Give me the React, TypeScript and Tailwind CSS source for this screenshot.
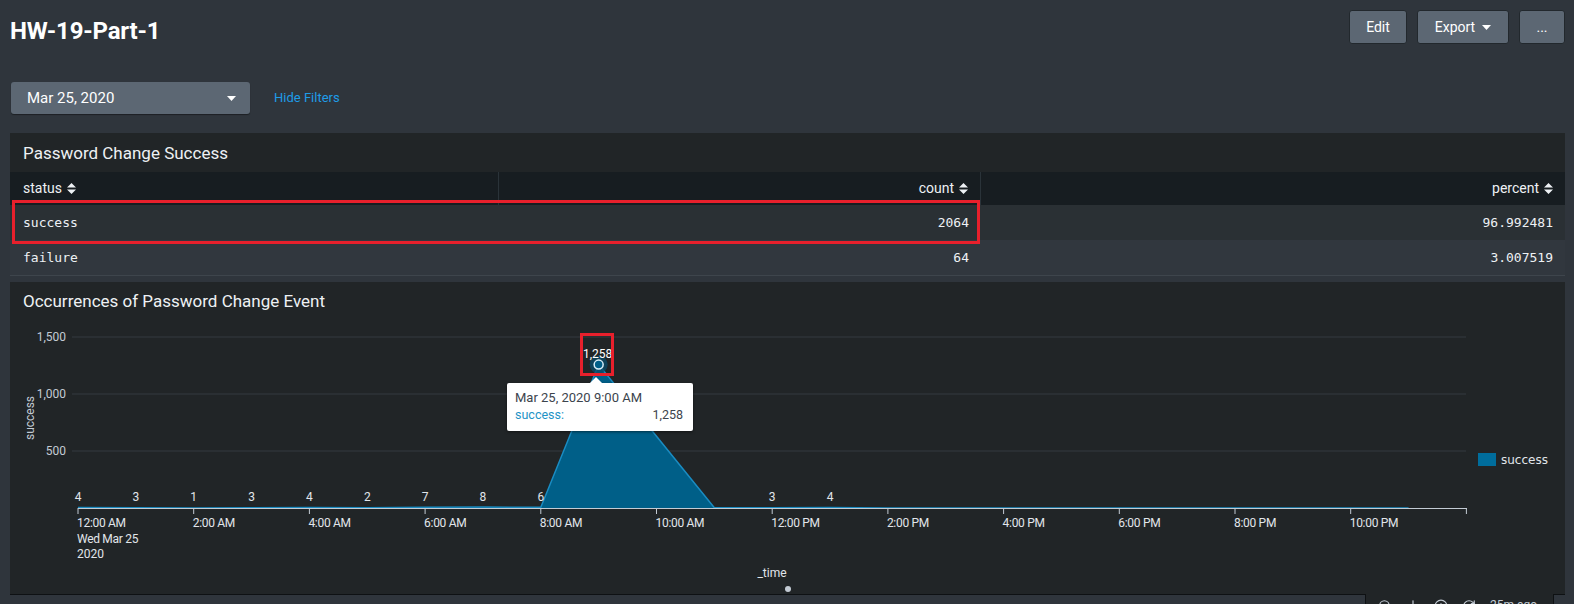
import { Search, Download, Info, RefreshCw } from "lucide-react";

const values = [4, 3, 1, 3, 4, 2, 7, 8, 6, 1258, 630, 2, 3, 4, 0, 0, 0, 0, 0, 0, 0, 0, 0, 0];
const labelled = [0, 1, 2, 3, 4, 5, 6, 7, 8, 12, 13];
const tickLabels = [
  "12:00 AM", "2:00 AM", "4:00 AM", "6:00 AM", "8:00 AM", "10:00 AM",
  "12:00 PM", "2:00 PM", "4:00 PM", "6:00 PM", "8:00 PM", "10:00 PM",
];

const X0 = 78;
const STEP = 57.85;
const BASE = 508;
const px = (i: number) => X0 + i * STEP;
const py = (v: number) => BASE - v * 0.114;

const SortIcon = () => (
  <svg width="9" height="11" viewBox="0 0 9 11" className="ml-[5px]">
    <path d="M4.5 0 L9 4.5 H0 Z M0 6.5 H9 L4.5 11 Z" fill="currentColor" />
  </svg>
);

const Caret = () => (
  <svg width="9" height="5" viewBox="0 0 9 5">
    <path d="M0 0 H9 L4.5 5 Z" fill="currentColor" />
  </svg>
);

const Chart = () => {
  const pts = values.map((v, i) => `${px(i)},${py(v)}`).join(" L");
  const area = `M${px(0)},${BASE} L${pts} L${px(23)},${BASE} Z`;
  const line = `M${pts}`;
  return (
    <svg width="1555" height="272" viewBox="10 322 1555 272" className="block">
      {[337, 394, 451].map((y) => (
        <line key={y} x1="72" x2="1466" y1={y} y2={y} stroke="#343b41" strokeWidth="1" />
      ))}
      {[["1,500", 337], ["1,000", 394], ["500", 451]].map(([t, y]) => (
        <text key={t} x="66" y={Number(y) + 4} textAnchor="end" fontSize="12" fill="#c3cbd4" fontFamily="Roboto, sans-serif">
          {t}
        </text>
      ))}
      <text
        x="0"
        y="0"
        transform="translate(34 418) rotate(-90)"
        textAnchor="middle"
        fontSize="12"
        fill="#c3cbd4"
        fontFamily="Roboto, sans-serif"
      >
        success
      </text>
      <path d={area} fill="#005f88" />
      <path d={line} fill="none" stroke="#1a8cc2" strokeWidth="1.5" />
      <line x1="78" x2="1467" y1={BASE + 0.5} y2={BASE + 0.5} stroke="#c3cbd4" strokeWidth="1" />
      {Array.from({ length: 13 }).map((_, k) => (
        <line key={k} x1={px(k * 2)} x2={px(k * 2)} y1={BASE} y2={BASE + 6} stroke="#c3cbd4" strokeWidth="1" />
      ))}
      {tickLabels.map((t, k) => (
        <text key={t} x={px(k * 2) - 1} y="527" fontSize="12" fill="#e1e6eb" fontFamily="Roboto, sans-serif" letterSpacing="-0.3">
          {t}
        </text>
      ))}
      <text x="77" y="543" fontSize="12" fill="#e1e6eb" fontFamily="Roboto, sans-serif" letterSpacing="-0.3">
        Wed Mar 25
      </text>
      <text x="77" y="558" fontSize="12" fill="#e1e6eb" fontFamily="Roboto, sans-serif">
        2020
      </text>
      {labelled.map((i) => (
        <text key={i} x={px(i)} y="501" textAnchor="middle" fontSize="12" fill="#e1e6eb" fontFamily="Roboto, sans-serif">
          {values[i]}
        </text>
      ))}
      <circle cx={px(9)} cy={py(1258)} r="9" fill="#0b4a66" opacity="0.8" />
      <circle cx={px(9)} cy={py(1258)} r="4.5" fill="#005f88" stroke="#d9eef8" strokeWidth="1.5" />
      <text x={px(9) - 1} y="358" textAnchor="middle" fontSize="12" fill="#ffffff" fontFamily="Roboto, sans-serif">
        1,258
      </text>
      <rect x="1478" y="453" width="18" height="13" fill="#006d9c" />
      <text x="1501" y="464" fontSize="12" fill="#e1e6eb" fontFamily="'DejaVu Sans', sans-serif">
        success
      </text>
      <text x="772" y="577" textAnchor="middle" fontSize="12" fill="#e1e6eb" fontFamily="Roboto, sans-serif">
        _time
      </text>
      <circle cx="788" cy="589" r="3" fill="#c3cbd4" />
    </svg>
  );
};

export default function App() {
  return (
    <div className="w-[1574px] h-[604px] overflow-hidden bg-[#2f353c] pl-[10px] pr-[9px] pt-[10px] font-['Roboto',sans-serif] text-[#e1e6eb]">
      <div className="flex items-start justify-between h-[34px]">
        <h1 className="text-[24px] font-bold text-white leading-none mt-[9px] tracking-[-0.2px]">HW-19-Part-1</h1>
        <div className="flex gap-[10px]">
          <button className="h-[34px] w-[58px] rounded-[3px] border border-[#22282d] bg-[#5c6773] text-[14px] text-white">
            Edit
          </button>
          <button className="h-[34px] w-[92px] rounded-[3px] border border-[#22282d] bg-[#5c6773] text-[14px] text-white flex items-center justify-center gap-[7px]">
            Export <Caret />
          </button>
          <button className="h-[34px] w-[46px] rounded-[3px] border border-[#22282d] bg-[#5c6773] text-[14px] text-white">
            ...
          </button>
        </div>
      </div>

      <div className="flex items-center mt-[38px] h-[32px]">
        <div className="ml-[1px] w-[239px] h-[32px] rounded-[3px] bg-[#5c6773] shadow-[0_1px_1px_rgba(0,0,0,0.4)] flex items-center justify-between pl-[16px] pr-[14px] text-[15px] text-white">
          <span>Mar 25, 2020</span>
          <Caret />
        </div>
        <a className="ml-[24px] text-[13px] text-[#1e9ce8]">Hide Filters</a>
      </div>

      <div className="relative mt-[19px] bg-[#212527] border-b border-[#3e454c]">
        <div className="h-[39px] flex items-center px-[13px] pt-[2px] text-[17px] text-[#eef1f4]">Password Change Success</div>
        <div className="grid grid-cols-[489px_482px_1fr] h-[33px] bg-[#171d21] text-[14px] text-[#eef1f4]">
          <div className="flex items-center pl-[13px] border-r border-[#2a3339]">
            status <SortIcon />
          </div>
          <div className="flex items-center justify-end pr-[12px] border-r border-[#2a3339]">
            count <SortIcon />
          </div>
          <div className="flex items-center justify-end pr-[12px]">
            percent <SortIcon />
          </div>
        </div>
        {[
          ["success", "2064", "96.992481", "bg-[#2a3034]"],
          ["failure", "64", "3.007519", "bg-[#31373e]"],
        ].map(([s, c, p, bg]) => (
          <div key={s} className={`grid grid-cols-[489px_482px_1fr] h-[35px] ${bg} font-['DejaVu_Sans_Mono',monospace] text-[13px] text-[#eef1f4]`}>
            <div className="flex items-center pl-[13px]">{s}</div>
            <div className="flex items-center justify-end pr-[12px]">{c}</div>
            <div className="flex items-center justify-end pr-[12px]">{p}</div>
          </div>
        ))}
        <div className="absolute left-[2px] top-[67px] w-[968px] h-[44px] border-[3px] border-[#e8202c]" />
      </div>

      <div className="relative mt-[6px] h-[313px] bg-[#212527] border-b border-[#0e1113]">
        <div className="h-[40px] flex items-center px-[13px] text-[17px] text-[#eef1f4]">
          Occurrences of Password Change Event
        </div>
        <Chart />
        <div className="absolute left-[570px] top-[51px] w-[34px] h-[43px] border-[3px] border-[#e8202c]" />
        <div className="absolute left-[497px] top-[101px] w-[186px] h-[48px] rounded-[2px] bg-white shadow-[0_1px_3px_rgba(0,0,0,0.5)] px-[8px] pt-[6px]">
          <div className="absolute -top-[6px] left-[82px] w-0 h-0 border-l-[7px] border-r-[7px] border-b-[7px] border-l-transparent border-r-transparent border-b-white" />
          <div className="text-[13px] leading-[17px] text-[#3c444d]">Mar 25, 2020 9:00 AM</div>
          <div className="flex justify-between text-[12.5px] leading-[17px]">
            <span className="text-[#1e93c6]">success:</span>
            <span className="text-[#3c444d] pr-[2px]">1,258</span>
          </div>
        </div>
        <div className="absolute top-[312px] right-[11px] w-[189px] h-[20px] bg-[#212527] border-x border-[#0e1113] flex items-start gap-[14px] pl-[12px] pt-[5px] text-[#c3cbd4]">
          <Search size={14} />
          <Download size={14} />
          <Info size={14} />
          <RefreshCw size={14} />
          <span className="text-[12px] leading-none">25m ago</span>
        </div>
      </div>
    </div>
  );
}
